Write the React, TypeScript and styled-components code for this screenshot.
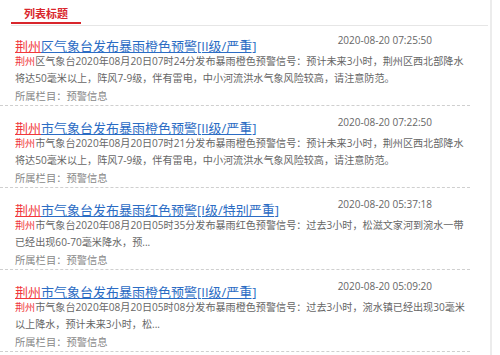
import React from 'react';
import styled, { createGlobalStyle } from 'styled-components';

const GlobalStyle = createGlobalStyle`
  body {
    margin: 0;
    background: #fff;
    font-family: "Open Sans", "Noto Sans CJK SC", sans-serif;
  }
`;

const Page = styled.div`
  display: flex;
  height: 355px;
  overflow: hidden;
`;

const Panel = styled.div`
  width: 490px;
  border-right: 2px solid #ececec;
`;

const TabBar = styled.div`
  display: flex;
  height: 25px;
  margin: 0 2px 0 11px;
  border-bottom: 1px solid #e6e6e6;
`;

const Tab = styled.div`
  width: 70px;
  height: 24px;
  padding-top: 6px;
  box-sizing: border-box;
  line-height: 16px;
  text-align: center;
  font-size: 11px;
  font-weight: 600;
  color: #d9262c;
  border-bottom: 2px solid #d9262c;
`;

const List = styled.ul`
  list-style: none;
  margin: 0;
  padding: 0;
  width: 470px;
`;

const Item = styled.li<{ $first?: boolean }>`
  padding: ${(p) => (p.$first ? 12 : 14)}px 0 0 15px;
  border-bottom: 1px dashed #cfcfcf;
`;

const Row = styled.div`
  display: flex;
  align-items: flex-start;
  justify-content: space-between;
  height: 16px;
`;

const Title = styled.a`
  font-size: 13px;
  line-height: 16px;
  color: #2b6cc4;
  text-decoration: underline;
  white-space: nowrap;
`;

const City = styled.span<{ $underline?: boolean }>`
  display: inline-block;
  line-height: 1.2;
  color: #f0383c;
  text-decoration: ${(p) => (p.$underline ? 'underline' : 'none')};
`;

const Time = styled.span`
  margin: -4px 38px 0 0;
  font-size: 10px;
  line-height: 12px;
  color: #666;
`;

const Desc = styled.p`
  margin: -1px 0 0 0;
  font-size: 10.1px;
  line-height: 17px;
  color: #666;
`;

const Meta = styled.div`
  font-size: 10.3px;
  line-height: 18px;
  color: #888;
`;

interface News {
  place: string;
  title: string;
  time: string;
  desc: string;
}

const newsList: News[] = [
  {
    place: '区',
    title: '气象台发布暴雨橙色预警[II级/严重]',
    time: '2020-08-20 07:25:50',
    desc: '区气象台2020年08月20日07时24分发布暴雨橙色预警信号：预计未来3小时，荆州区西北部降水将达50毫米以上，阵风7-9级，伴有雷电，中小河流洪水气象风险较高，请注意防范。',
  },
  {
    place: '市',
    title: '气象台发布暴雨橙色预警[II级/严重]',
    time: '2020-08-20 07:22:50',
    desc: '市气象台2020年08月20日07时21分发布暴雨橙色预警信号：预计未来3小时，荆州区西北部降水将达50毫米以上，阵风7-9级，伴有雷电，中小河流洪水气象风险较高，请注意防范。',
  },
  {
    place: '市',
    title: '气象台发布暴雨红色预警[I级/特别严重]',
    time: '2020-08-20 05:37:18',
    desc: '市气象台2020年08月20日05时35分发布暴雨红色预警信号：过去3小时，松滋文家河到涴水一带已经出现60-70毫米降水，预...',
  },
  {
    place: '市',
    title: '气象台发布暴雨橙色预警[II级/严重]',
    time: '2020-08-20 05:09:20',
    desc: '市气象台2020年08月20日05时08分发布暴雨橙色预警信号：过去3小时，涴水镇已经出现30毫米以上降水，预计未来3小时，松...',
  },
];

const App: React.FC = () => {
  return (
    <>
      <GlobalStyle />
      <Page>
        <Panel>
          <TabBar>
            <Tab>列表标题</Tab>
          </TabBar>
          <List>
            {newsList.map((news, index) => (
              <Item key={index} $first={index === 0}>
                <Row>
                  <Title href="#">
                    <City $underline>荆州</City>
                    {news.place}
                    {news.title}
                  </Title>
                  <Time>{news.time}</Time>
                </Row>
                <Desc>
                  <City>荆州</City>
                  {news.desc}
                </Desc>
                <Meta>所属栏目：预警信息</Meta>
              </Item>
            ))}
          </List>
        </Panel>
      </Page>
    </>
  );
};

export default App;
